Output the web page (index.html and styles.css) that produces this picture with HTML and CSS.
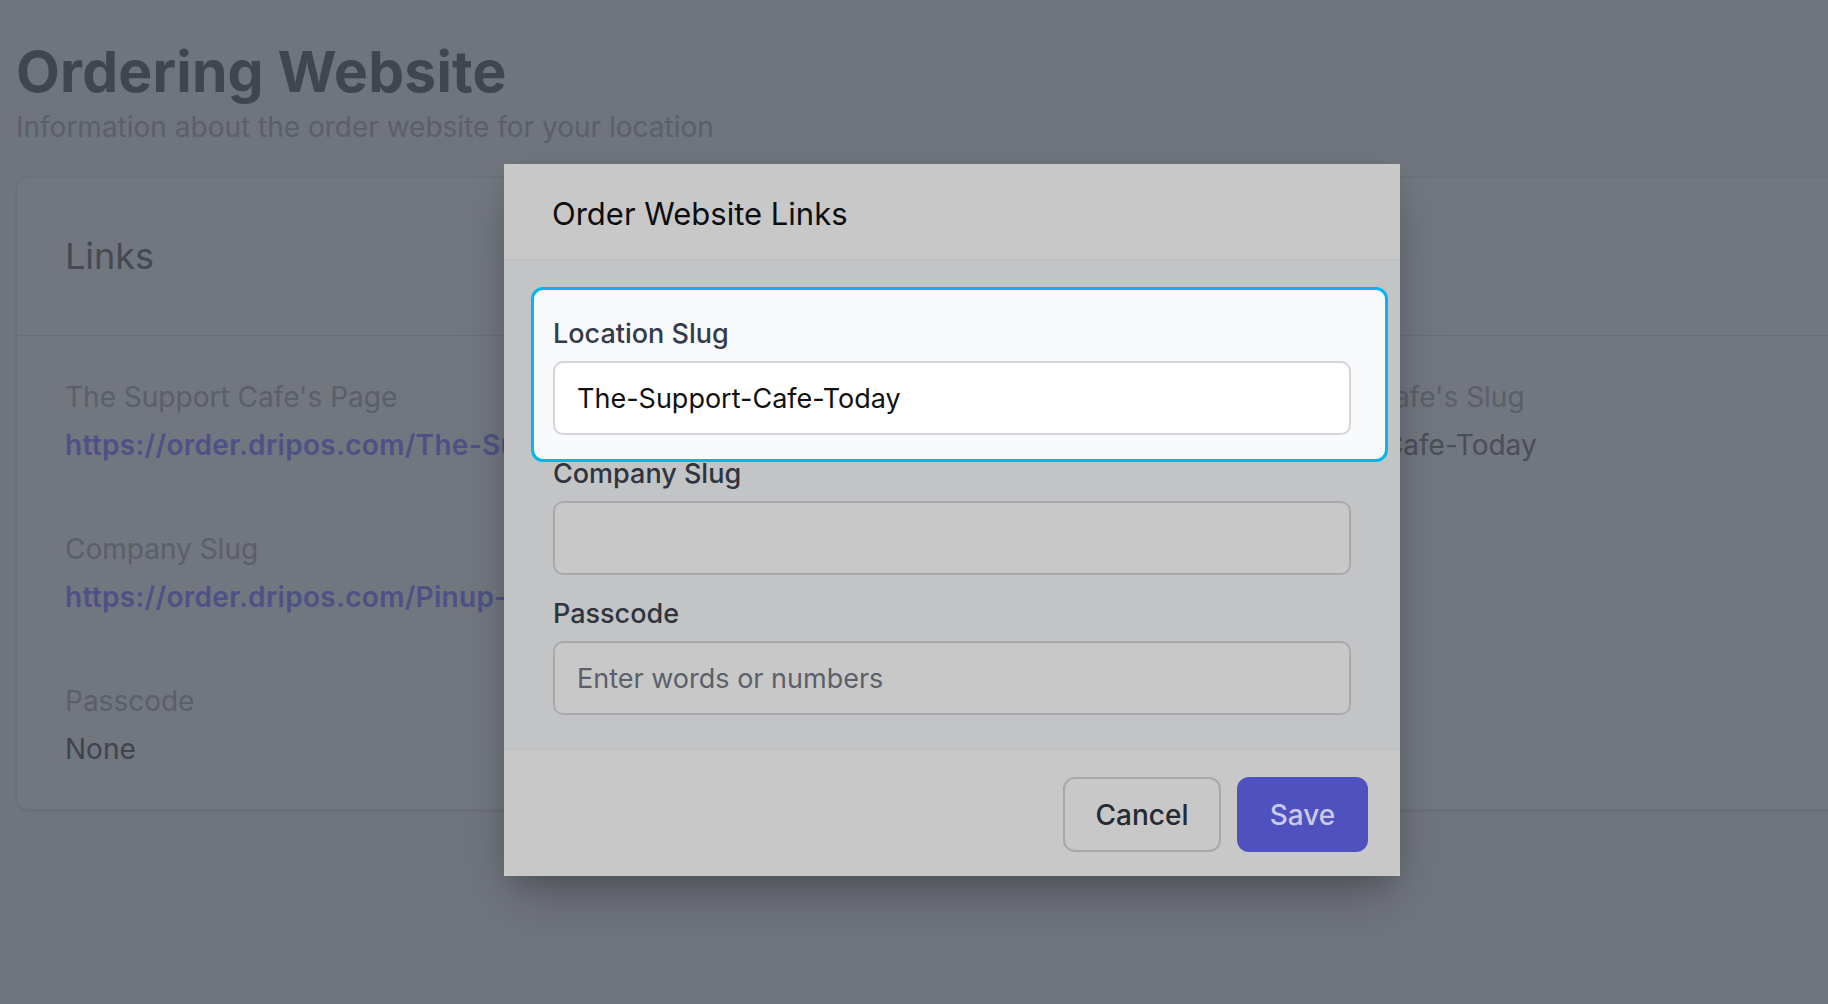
FILE: index.html
```html
<!DOCTYPE html>
<html lang="en">
<head>
<meta charset="utf-8">
<title>Ordering Website</title>
<link rel="stylesheet" href="styles.css">
</head>
<body>
<div class="page">
  <h1 class="title">Ordering Website</h1>
  <p class="subtitle">Information about the order website for your location</p>

  <section class="card">
    <div class="card-header">
      <h2>Links</h2>
    </div>
    <div class="card-body">
      <div class="item">
        <div class="label">The Support Cafe's Page</div>
        <div class="value link">https://order.dripos.com/The-Support-Cafe-Today</div>
      </div>
      <div class="item">
        <div class="label">The Support Cafe's Slug</div>
        <div class="value">The-Support-Cafe-Today</div>
      </div>
      <div class="item">
        <div class="label">Company Slug</div>
        <div class="value link">https://order.dripos.com/Pinup-Coffee</div>
      </div>
      <div class="item"></div>
      <div class="item">
        <div class="label">Passcode</div>
        <div class="value dark">None</div>
      </div>
    </div>
  </section>
</div>

<div class="modal">
  <div class="modal-header">Order Website Links</div>
  <div class="modal-body">
    <div class="field spotlight">
      <label class="field-label">Location Slug</label>
      <div class="input filled">The-Support-Cafe-Today</div>
    </div>
    <div class="field">
      <label class="field-label">Company Slug</label>
      <div class="input"></div>
    </div>
    <div class="field">
      <label class="field-label">Passcode</label>
      <div class="input placeholder">Enter words or numbers</div>
    </div>
  </div>
  <div class="modal-footer">
    <button class="btn btn-cancel">Cancel</button>
    <button class="btn btn-save">Save</button>
  </div>
</div>
</body>
</html>
```
FILE: styles.css
```css
html, body {
  margin: 0;
  padding: 0;
  height: 100%;
}
body {
  background: #70747d;
  font-family: Inter, "Noto Sans", "Liberation Sans", sans-serif;
  overflow: hidden;
  position: relative;
}
.page {
  padding: 43px 0 0 16px;
}
.title {
  margin: 0;
  font-size: 57px;
  line-height: 1;
  font-weight: 700;
  color: #41454f;
  letter-spacing: 0.2px;
}
.subtitle {
  margin: 13px 0 0;
  font-size: 28px;
  line-height: 1;
  color: #5b5f69;
}
.card {
  margin: 36px -60px 0 0;
  background: #72767f;
  border: 1px solid #6b6f78;
  border-radius: 12px;
  box-shadow: 0 1px 3px rgba(0,0,0,0.06);
}
.card-header {
  padding: 60px 48px 61px;
  border-bottom: 1px solid #6a6e77;
}
.card-header h2 {
  margin: 0;
  font-size: 36px;
  line-height: 1;
  font-weight: 400;
  color: #454953;
}
.card-body {
  padding: 47px 48px 46px;
  display: grid;
  grid-template-columns: 1136px 1fr;
  row-gap: 76px;
}
.item .label {
  font-size: 28px;
  line-height: 1;
  color: #5b5f69;
  margin-bottom: 20px;
  white-space: nowrap;
}
.item .value {
  font-size: 28px;
  line-height: 1;
  color: #4a4e58;
  white-space: nowrap;
}
.item .value.link {
  color: #4e5186;
  font-weight: 600;
  letter-spacing: 0.3px;
}
.item .value.dark {
  color: #40444e;
}

/* modal */
.modal {
  position: absolute;
  left: 504px;
  top: 164px;
  width: 896px;
  background: #c8c8c8;
  box-shadow: 0 25px 50px -12px rgba(0,0,0,0.3), 0 10px 20px -5px rgba(0,0,0,0.1);
}
.modal-header {
  padding: 34px 48px 30px;
  font-size: 31px;
  line-height: 1;
  font-weight: 400;
  color: #0d0d0f;
  border-bottom: 2px solid #bebfc0;
}
.modal-body {
  background: #c3c4c6;
  padding: 59px 49px 33px 49px;
  border-bottom: 2px solid #bebfc0;
}
.field + .field {
  margin-top: 25px;
}
.field-label {
  display: block;
  font-size: 27px;
  line-height: 1;
  font-weight: 500;
  color: #2f343e;
  margin-bottom: 14px;
}
.input {
  box-sizing: border-box;
  height: 74px;
  border: 2px solid #a7a9ac;
  border-radius: 10px;
  background: #c8c8c8;
  padding: 0 22px;
  display: flex;
  align-items: center;
  font-size: 27px;
  color: #111;
}
.input.placeholder {
  color: #5b606b;
}
.spotlight {
  position: relative;
  z-index: 1;
}
.spotlight::before {
  content: "";
  position: absolute;
  top: -33px;
  left: -22px;
  right: -37px;
  bottom: -27px;
  background: #f8f9fb;
  border: 3px solid #0ab3ee;
  border-radius: 12px;
  z-index: -1;
}
.spotlight .field-label {
  color: #353b48;
}
.spotlight .input {
  background: #ffffff;
  border-color: #d3d5d9;
}

.modal-footer {
  display: flex;
  justify-content: flex-end;
  gap: 16px;
  padding: 27px 32px 24px;
}
.btn {
  box-sizing: border-box;
  height: 75px;
  border-radius: 12px;
  font-family: inherit;
  font-size: 28px;
  font-weight: 500;
  padding: 0;
}
.btn-cancel {
  width: 158px;
  background: #c8c8c8;
  border: 2px solid #a5a8ad;
  color: #262a35;
}
.btn-save {
  width: 131px;
  background: #4f51bf;
  border: none;
  color: #c9cae8;
}
```
